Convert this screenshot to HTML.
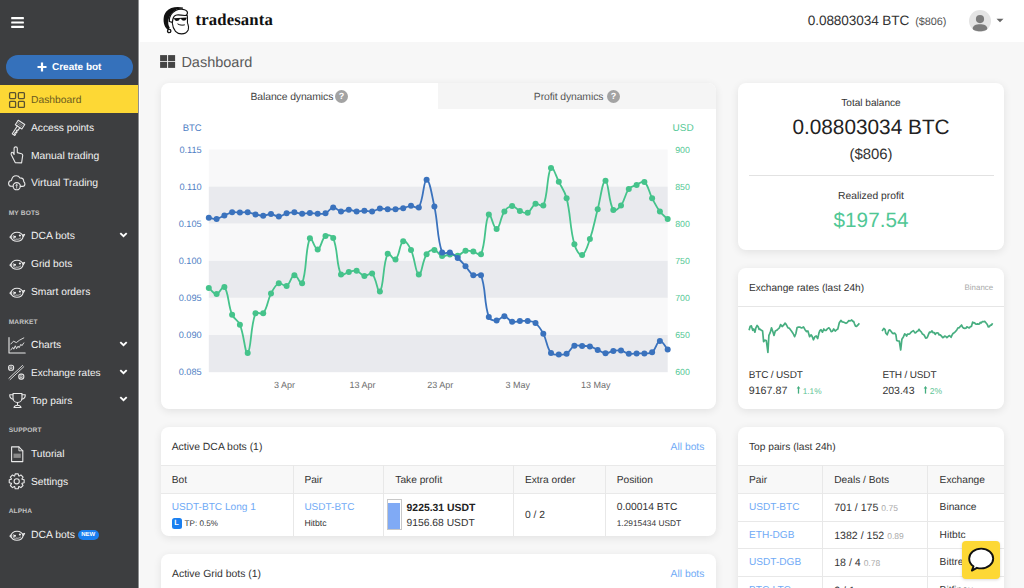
<!DOCTYPE html>
<html><head><meta charset="utf-8">
<style>
*{margin:0;padding:0;box-sizing:border-box}
html,body{width:1024px;height:588px;overflow:hidden;background:#f7f7f7;font-family:"Liberation Sans",sans-serif;color:#333;text-rendering:geometricPrecision;-webkit-font-smoothing:antialiased}
.a{position:absolute;white-space:nowrap}
.t{position:absolute;white-space:nowrap;line-height:20px;height:20px;margin-top:1px}
#side{position:absolute;left:0;top:0;width:138px;height:588px;background:#3d3e40}
#sedge{position:absolute;left:138px;top:0;width:1px;height:588px;background:#8f9091}
#swhite{position:absolute;left:139px;top:0;width:1px;height:588px;background:#fff}
#head{position:absolute;left:139px;top:0;width:885px;height:42px;background:#fff}
.card{position:absolute;background:#fff;border-radius:8px;box-shadow:0 2px 9px rgba(0,0,0,.09)}
.side-t{position:absolute;left:31px;font-size:10.3px;color:#f2f2f2;line-height:20px;height:20px;white-space:nowrap;margin-top:1px}
.sec{position:absolute;left:8.7px;font-size:6.6px;color:#c4c4c4;line-height:10px;height:10px;font-weight:bold;letter-spacing:0.15px;margin-top:1px}
.ic{position:absolute;left:8px}
.chev{position:absolute;left:119px}
</style></head>
<body>
<div id="side">
  <!-- hamburger -->
  <svg class="a" style="left:0;top:0" width="30" height="32"><rect x="11.2" y="17" width="12.7" height="2.2" rx="0.5" fill="#fff"/><rect x="11.2" y="21.4" width="12.7" height="2.2" rx="0.5" fill="#fff"/><rect x="11.2" y="25.8" width="12.7" height="2.2" rx="0.5" fill="#fff"/></svg>
  <!-- create bot -->
  <div class="a" style="left:6px;top:55px;width:127px;height:24px;border-radius:12px;background:#3571bb"></div>
  <svg class="a" style="left:36px;top:61px" width="12" height="12" viewBox="0 0 12 12"><path d="M6 1.5V10.5M1.5 6H10.5" stroke="#fff" stroke-width="2.2"/></svg>
  <div class="t" style="left:52px;top:57px;font-size:10px;font-weight:bold;color:#fff">Create bot</div>
  <!-- dashboard active -->
  <div class="a" style="left:0;top:85px;width:138px;height:28px;background:#fdd835"></div>
  <svg class="a" style="left:8px;top:91px" width="18" height="18" viewBox="0 0 18 18" fill="none" stroke="#5a5230" stroke-width="1.3"><rect x="1.6" y="1.6" width="6" height="6" rx="1"/><rect x="10.4" y="1.6" width="6" height="6" rx="1"/><rect x="1.6" y="10.4" width="6" height="6" rx="1"/><rect x="10.4" y="10.4" width="6" height="6" rx="1"/></svg>
  <div class="side-t" style="top:89.6px;color:#6b5a1f">Dashboard</div>
  <svg class="ic" style="top:118.7px" width="19" height="19" viewBox="0 0 19 19" fill="none" stroke="#e9e9e9" stroke-width="1.1" stroke-linejoin="round" stroke-linecap="round"><g transform="rotate(33 9.5 9.5)"><path d="M5.6 2.2h7.8v5.3H5.6z"/><path d="M7 4.1h5M7 5.6h5" stroke-width="0.7" stroke="#9a9a9a"/><path d="M8 7.5V16.8h3v-1.4h-1.1v-1.5h1.1v-1.4h-1.1V11h1.1V7.5"/></g></svg>
  <div class="side-t" style="top:117.8px;font-size:10.23px">Access points</div>
  <svg class="ic" style="top:146.4px" width="19" height="19" viewBox="0 0 19 19" fill="none" stroke="#e9e9e9" stroke-width="1.1" stroke-linejoin="round" stroke-linecap="round"><path d="M7.2 16.6 3.3 8.7C2.8 7.4 3.6 5.6 4.8 6.4L6.1 8.5V2.2C6.1.4 9.3.4 9.3 2.2V6.6l4.2 1.1c.8.2 1.2.8 1.2 1.6l-1.1 7.6z"/></svg>
  <div class="side-t" style="top:145.5px;font-size:10.33px">Manual trading</div>
  <svg class="ic" style="top:173.8px" width="19" height="19" viewBox="0 0 19 19" fill="none" stroke="#e9e9e9" stroke-width="1.1" stroke-linejoin="round" stroke-linecap="round"><path d="M5 12.3H3.6C1.8 12.3.6 11 .6 9.4c0-1.6 1.2-2.8 2.8-2.9C3.9 3.7 5.6 1.7 8.2 1.7c1.8 0 3.1.9 3.8 2.2 2.4 0 3.8 1.7 3.8 3.9.7.5 1.1 1.4 1.1 2.2 0 1.4-1.1 2.4-2.5 2.4h-2.1"/><circle cx="8.7" cy="12.2" r="3.6"/><path d="M8.7 10.2v4M7.8 11.2c.4-.5 1.4-.5 1.8 0" stroke-width="0.8"/></svg>
  <div class="side-t" style="top:172.9px;font-size:10.45px">Virtual Trading</div>
  <div class="sec" style="top:207.9px">MY BOTS</div>
  <svg class="ic" style="top:227.0px" width="19" height="19" viewBox="0 0 19 19" fill="none" stroke="#e9e9e9" stroke-width="1.1" stroke-linejoin="round" stroke-linecap="round"><ellipse cx="9" cy="9.8" rx="6" ry="4.5"/><path d="M3.2 8.8 1.9 10.1 3.3 11.3M14.6 8.1l2-.7-1.3 2.2"/><path d="M5.300 8.700c-.6 1.600.2 3.400 2 4" stroke-width="0.8"/><circle cx="6.9" cy="9.8" r="1.1" fill="#f0f0f0" stroke="none"/><circle cx="11.9" cy="8.5" r="1.1" fill="#f0f0f0" stroke="none"/><path d="M8.2 12.1c1.5.4 3 .1 4.4-1" stroke-width="0.8"/></svg>
  <div class="side-t" style="top:226.1px;font-size:10.4px">DCA bots</div>
  <svg class="chev" style="top:230.9px" width="9" height="8" viewBox="0 0 9 8"><path d="M1.3 2.1 4.5 5.2 7.7 2.1" fill="none" stroke="#fff" stroke-width="1.9"/></svg>
  <svg class="ic" style="top:254.9px" width="19" height="19" viewBox="0 0 19 19" fill="none" stroke="#e9e9e9" stroke-width="1.1" stroke-linejoin="round" stroke-linecap="round"><ellipse cx="9" cy="9.8" rx="6" ry="4.5"/><path d="M3.2 8.8 1.9 10.1 3.3 11.3M14.6 8.1l2-.7-1.3 2.2"/><path d="M5.300 8.700c-.6 1.600.2 3.400 2 4" stroke-width="0.8"/><circle cx="6.9" cy="9.8" r="1.1" fill="#f0f0f0" stroke="none"/><circle cx="11.9" cy="8.5" r="1.1" fill="#f0f0f0" stroke="none"/><path d="M8.2 12.1c1.5.4 3 .1 4.4-1" stroke-width="0.8"/></svg>
  <div class="side-t" style="top:254.0px;font-size:10.2px">Grid bots</div>
  <svg class="ic" style="top:282.6px" width="19" height="19" viewBox="0 0 19 19" fill="none" stroke="#e9e9e9" stroke-width="1.1" stroke-linejoin="round" stroke-linecap="round"><ellipse cx="9" cy="9.8" rx="6" ry="4.5"/><path d="M3.2 8.8 1.9 10.1 3.3 11.3M14.6 8.1l2-.7-1.3 2.2"/><path d="M5.300 8.700c-.6 1.600.2 3.400 2 4" stroke-width="0.8"/><circle cx="6.9" cy="9.8" r="1.1" fill="#f0f0f0" stroke="none"/><circle cx="11.9" cy="8.5" r="1.1" fill="#f0f0f0" stroke="none"/><path d="M8.2 12.1c1.5.4 3 .1 4.4-1" stroke-width="0.8"/></svg>
  <div class="side-t" style="top:281.7px;font-size:10.28px">Smart orders</div>
  <div class="sec" style="top:316.5px">MARKET</div>
  <svg class="ic" style="top:335.6px" width="19" height="19" viewBox="0 0 19 19" fill="none" stroke="#e9e9e9" stroke-width="1.1" stroke-linejoin="round" stroke-linecap="round"><path d="M1 1.5v15.5h16.2"/><path d="M2.8 8l2.7-2.8 2.8 1.4 3.2-2.4 4.3-2.3" stroke-width="0.9"/><path d="M2.8 14l2-2.6 1 1.8 1.5-3.4 1.3 2.9 1.5-2.6 1 1.6 1.8-3.4 1 1.4 1.9-2.8" stroke-width="0.9"/></svg>
  <div class="side-t" style="top:334.7px;font-size:10.22px">Charts</div>
  <svg class="chev" style="top:339.5px" width="9" height="8" viewBox="0 0 9 8"><path d="M1.3 2.1 4.5 5.2 7.7 2.1" fill="none" stroke="#fff" stroke-width="1.9"/></svg>
  <svg class="ic" style="top:363.8px" width="19" height="19" viewBox="0 0 19 19" fill="none" stroke="#e9e9e9" stroke-width="1.1" stroke-linejoin="round" stroke-linecap="round"><path d="M14.6 1.4.9 14.3M15.8 2.7 2.1 15.6" stroke-width="0.9"/><rect x="0.6" y="1.2" width="5" height="5" rx="2"/><rect x="10.8" y="10.1" width="5" height="5" rx="2"/><rect x="2.3" y="2.9" width="1.7" height="1.7" stroke-width="0.7"/><rect x="12.5" y="11.8" width="1.7" height="1.7" stroke-width="0.7"/></svg>
  <div class="side-t" style="top:362.9px;font-size:10.0px">Exchange rates</div>
  <svg class="chev" style="top:367.7px" width="9" height="8" viewBox="0 0 9 8"><path d="M1.3 2.1 4.5 5.2 7.7 2.1" fill="none" stroke="#fff" stroke-width="1.9"/></svg>
  <svg class="ic" style="top:391.4px" width="19" height="19" viewBox="0 0 19 19" fill="none" stroke="#e9e9e9" stroke-width="1.1" stroke-linejoin="round" stroke-linecap="round"><path d="M5 2.5h9v4.5c0 2.6-2 4.5-4.5 4.5S5 9.6 5 7z"/><path d="M5 3.8H1.7c0 2.5 1.5 4.2 3.6 4.4M14 3.8h3.3c0 2.5-1.5 4.2-3.6 4.4"/><path d="M9.5 11.5v2.8M6 16.5c.3-1.3 1.8-2.2 3.5-2.2s3.2.9 3.5 2.2z"/></svg>
  <div class="side-t" style="top:390.5px;font-size:10.2px">Top pairs</div>
  <svg class="chev" style="top:395.3px" width="9" height="8" viewBox="0 0 9 8"><path d="M1.3 2.1 4.5 5.2 7.7 2.1" fill="none" stroke="#fff" stroke-width="1.9"/></svg>
  <div class="sec" style="top:425.3px">SUPPORT</div>
  <svg class="ic" style="top:444.7px" width="19" height="19" viewBox="0 0 19 19" fill="none" stroke="#e9e9e9" stroke-width="1.1" stroke-linejoin="round" stroke-linecap="round"><path d="M3.6 1.9h7.3l3.9 3.9V16.6H3.6z"/><path d="M10.9 1.9v3.9h3.9" stroke-width="0.9"/><rect x="5.5" y="8.6" width="7.3" height="4.3" fill="#8a8a8a" stroke="none"/></svg>
  <div class="side-t" style="top:443.8px;font-size:10.16px">Tutorial</div>
  <svg class="ic" style="top:472.4px" width="19" height="19" viewBox="0 0 19 19" fill="none" stroke="#e9e9e9" stroke-width="1.1" stroke-linejoin="round" stroke-linecap="round"><path d="M14.03,7.29 L16.15,7.79 L16.15,10.81 L14.03,11.31 L13.89,11.65 L15.03,13.50 L12.90,15.63 L11.05,14.49 L10.71,14.63 L10.21,16.75 L7.19,16.75 L6.69,14.63 L6.35,14.49 L4.50,15.63 L2.37,13.50 L3.51,11.65 L3.37,11.31 L1.25,10.81 L1.25,7.79 L3.37,7.29 L3.51,6.95 L2.37,5.10 L4.50,2.97 L6.35,4.11 L6.69,3.97 L7.19,1.85 L10.21,1.85 L10.71,3.97 L11.05,4.11 L12.90,2.97 L15.03,5.10 L13.89,6.95Z"/><circle cx="8.7" cy="9.3" r="2.6"/></svg>
  <div class="side-t" style="top:471.5px;font-size:10.3px">Settings</div>
  <div class="sec" style="top:506.3px">ALPHA</div>
  <svg class="ic" style="top:525.6px" width="19" height="19" viewBox="0 0 19 19" fill="none" stroke="#e9e9e9" stroke-width="1.1" stroke-linejoin="round" stroke-linecap="round"><ellipse cx="9" cy="9.8" rx="6" ry="4.5"/><path d="M3.2 8.8 1.9 10.1 3.3 11.3M14.6 8.1l2-.7-1.3 2.2"/><path d="M5.300 8.700c-.6 1.600.2 3.400 2 4" stroke-width="0.8"/><circle cx="6.9" cy="9.8" r="1.1" fill="#f0f0f0" stroke="none"/><circle cx="11.9" cy="8.5" r="1.1" fill="#f0f0f0" stroke="none"/><path d="M8.2 12.1c1.5.4 3 .1 4.4-1" stroke-width="0.8"/></svg>
  <div class="side-t" style="top:524.7px;font-size:10.4px">DCA bots</div>
  <div class="a" style="left:77.5px;top:529.7px;width:21.5px;height:10px;border-radius:5px;background:#1a7ff0;color:#fff;font-size:6px;font-weight:bold;line-height:10px;text-align:center">NEW</div>
</div>
<div id="sedge"></div><div id="swhite"></div><div id="head"></div>
<!-- logo -->
<svg class="a" style="left:161px;top:4px" width="32" height="33" viewBox="0 0 32 33">
  <path d="M22 3.6C15.5 2.2 9 3.3 5.3 7.5 2.3 11 2 16.5 3.4 21c.8 2.5 2.300 4.100 3.800 5l1.600-2.200C7.300 21.500 7 19 7.400 16.300 8 12.300 10.300 8.500 14 6.400c2.300-1.200 5.200-1.700 7.500-1.500z" fill="#111"/>
  <path d="M8.300 17.500C8 13 10.200 8.800 14.600 6.500c2.900-1.400 6.400-1.600 8.900-.8 2 .6 3.200 1.900 2.900 3.600-.2 1.300-1.100 2.200-2.300 2.200-3.100-.4-6.300-.8-8.400-.5-2.200.3-3.500 2.300-3.900 4.500L11.400 18.300z" fill="#fff" stroke="#111" stroke-width="1.2" stroke-linejoin="round"/>
  <path d="M12.4 14.2 25.8 13.5l-.3 1.3c-.5 1.5-2 2.1-3.5 1.8-1.2-.2-1.7-1.1-2-1.8l-1.3.1c-.3 1.1-1.3 2-2.9 2-1.5 0-2.200-1-2.500-1.900h-.9z" fill="#111"/>
  <path d="M11.2 18.5c.3 3.5 1.3 6.5 3.3 8.8 1.5 1.700 3.500 2.600 6 2.600 3 0 5.500-1.400 6.700-3.900.7-1.600.6-3.500-.2-5.500-.3-.7-.5-1.500-.6-2M26.1 10.9c.7 2.300.4 5.300.3 7.600" fill="none" stroke="#111" stroke-width="1.1"/>
  <path d="M16.5 19.8c2 1.4 5 1.700 7.300 1" fill="none" stroke="#111" stroke-width="1"/>
  <circle cx="8.2" cy="27" r="1.7" fill="#fff" stroke="#111" stroke-width="1.3"/>
</svg>
<div class="t" style="left:195.6px;top:9.4px;font-family:'Liberation Serif',serif;font-weight:bold;font-size:16.7px;color:#111;letter-spacing:0.13px">tradesanta</div>
<div class="t" style="left:807.8px;top:10.1px;font-size:13.6px;letter-spacing:-0.1px;color:#333">0.08803034 BTC</div>
<div class="t" style="left:915.2px;top:10.9px;font-size:10.9px;letter-spacing:-0.05px;color:#555">($806)</div>
<svg class="a" style="left:969.2px;top:9.5px" width="22" height="22" viewBox="0 0 22 22"><circle cx="11" cy="11" r="11" fill="#e4e4e4"/><circle cx="11" cy="9.1" r="4.1" fill="#7b7b7b"/><path d="M3.7 18.6C3.7 15.8 6.800 14.300 11 14.300S18.300 15.800 18.300 18.600C18.300 20.300 15 21.300 11 21.300S3.700 20.300 3.700 18.600z" fill="#7b7b7b"/></svg>
<svg class="a" style="left:996.3px;top:18.2px" width="8" height="5" viewBox="0 0 8 5"><path d="M0.5 0.8h7L4 4.3z" fill="#666"/></svg>

<!-- page title -->
<svg class="a" style="left:160px;top:55px" width="16" height="14" viewBox="0 0 16 14"><rect x="0.1" y="0.1" width="7" height="6" fill="#444"/><rect x="8.1" y="0.1" width="7" height="6" fill="#444"/><rect x="0.1" y="6.9" width="7" height="6" fill="#444"/><rect x="8.1" y="6.9" width="7" height="6" fill="#444"/></svg>
<div class="t" style="left:181.4px;top:52px;font-size:14.5px;color:#5a5a5a">Dashboard</div>

<!-- chart card -->
<div class="card" style="left:161px;top:83px;width:555px;height:326px;overflow:hidden">
  <div class="a" style="left:277px;top:0;width:278px;height:26px;background:#f5f5f5"></div>
</div>
<div class="t" style="left:250.5px;top:87.1px;font-size:10.4px;letter-spacing:-0.1px;color:#444">Balance dynamics</div>
<div class="a" style="left:335px;top:90.2px;width:13px;height:13px;border-radius:50%;background:#a3a3a3;color:#fff;font-size:9px;font-weight:bold;text-align:center;line-height:13px">?</div>
<div class="t" style="left:533.8px;top:87.1px;font-size:10.4px;letter-spacing:-0.1px;color:#555">Profit dynamics</div>
<div class="a" style="left:607px;top:90.2px;width:13px;height:13px;border-radius:50%;background:#a3a3a3;color:#fff;font-size:9px;font-weight:bold;text-align:center;line-height:13px">?</div>

<svg class="a" style="left:0;top:0" width="1024" height="588">
  <rect x="208.8" y="149.5" width="458.9" height="37.1" fill="#f8f8f9"/>
  <rect x="208.8" y="186.6" width="458.9" height="37.1" fill="#e9eaee"/>
  <rect x="208.8" y="223.7" width="458.9" height="37.1" fill="#f8f8f9"/>
  <rect x="208.8" y="260.8" width="458.9" height="37.1" fill="#e9eaee"/>
  <rect x="208.8" y="297.9" width="458.9" height="37.1" fill="#f8f8f9"/>
  <rect x="208.8" y="335.0" width="458.9" height="37.2" fill="#e9eaee"/>
  <path d="M208.8,287.9C211.9,290.3 213.6,294.2 216.6,294.0C219.8,293.8 222.7,284.7 224.4,286.9C228.9,293.0 227.8,304.2 232.1,314.7C234.0,319.3 238.0,320.1 239.9,324.7C244.3,335.4 245.1,354.8 247.7,352.9C251.3,350.3 250.3,326.6 255.5,313.3C256.5,310.7 261.6,315.3 263.2,313.2C267.8,307.4 267.2,301.0 271.0,293.6C273.4,289.0 275.0,285.1 278.8,283.2C281.2,282.0 284.2,287.2 286.6,286.0C290.4,284.0 291.0,275.8 294.4,275.2C297.2,274.7 300.9,286.1 302.1,283.2C307.1,271.3 305.1,248.7 309.9,238.3C311.3,235.2 314.8,249.8 317.7,249.4C321.0,248.9 321.4,239.0 325.5,236.0C327.6,234.5 332.1,235.4 333.2,238.1C338.4,250.8 335.9,263.5 341.0,274.6C342.2,277.0 345.6,272.7 348.8,271.9C351.8,271.2 353.7,270.1 356.6,270.8C360.0,271.7 361.0,275.4 364.4,276.0C367.3,276.5 370.3,271.8 372.1,273.6C376.5,278.0 377.8,294.3 379.9,291.6C384.0,286.3 382.7,264.0 387.7,253.7C388.9,251.1 393.4,261.1 395.5,259.5C399.7,256.1 399.3,243.6 403.2,241.2C405.6,239.8 409.1,245.8 411.0,250.0C415.3,259.2 415.4,273.7 418.8,274.6C421.7,275.4 422.2,261.3 426.6,254.3C428.4,251.4 431.4,249.7 434.4,250.0C437.6,250.4 438.7,255.1 442.1,256.1C444.9,256.9 446.8,254.6 449.9,254.5C453.0,254.4 454.8,256.4 457.7,255.7C461.0,254.9 462.1,251.7 465.5,250.8C468.3,250.0 470.2,250.9 473.3,251.6C476.4,252.3 480.0,256.8 481.0,254.3C486.2,242.0 484.4,221.8 488.8,214.6C490.6,211.7 493.7,229.7 496.6,229.1C499.9,228.4 500.2,217.7 504.4,211.5C506.4,208.4 509.0,206.1 512.1,206.0C515.2,205.9 516.6,209.5 519.9,210.9C522.8,212.1 525.2,213.9 527.7,212.7C531.4,211.0 531.8,205.4 535.5,203.7C538.0,202.6 542.2,208.1 543.3,205.6C548.4,193.7 546.6,174.6 551.0,167.9C552.9,165.1 555.9,176.1 558.8,181.8C562.1,188.3 564.8,191.2 566.6,198.2C571.1,216.2 569.5,226.5 574.4,244.2C575.8,249.3 579.5,256.0 582.1,255.1C585.7,253.9 587.6,245.8 589.9,239.1C593.9,227.4 594.5,221.1 597.7,209.2C600.7,197.8 602.4,180.7 605.5,180.8C608.6,180.9 608.5,202.3 613.3,209.9C614.7,212.2 619.0,208.2 621.0,205.4C625.2,199.8 624.6,194.5 628.8,189.0C630.8,186.3 633.4,186.3 636.6,184.9C639.6,183.5 642.4,180.3 644.4,182.0C648.6,185.6 648.8,191.8 652.1,198.2C655.0,203.6 656.3,206.6 659.9,211.5C662.5,215.0 664.6,216.1 667.7,219.1" fill="none" stroke="#45c38b" stroke-width="1.8"/>
  <g fill="#45c38b"><circle cx="208.8" cy="287.9" r="3"/><circle cx="216.6" cy="294.0" r="3"/><circle cx="224.4" cy="286.9" r="3"/><circle cx="232.1" cy="314.7" r="3"/><circle cx="239.9" cy="324.7" r="3"/><circle cx="247.7" cy="352.9" r="3"/><circle cx="255.5" cy="313.3" r="3"/><circle cx="263.2" cy="313.2" r="3"/><circle cx="271.0" cy="293.6" r="3"/><circle cx="278.8" cy="283.2" r="3"/><circle cx="286.6" cy="286.0" r="3"/><circle cx="294.4" cy="275.2" r="3"/><circle cx="302.1" cy="283.2" r="3"/><circle cx="309.9" cy="238.3" r="3"/><circle cx="317.7" cy="249.4" r="3"/><circle cx="325.5" cy="236.0" r="3"/><circle cx="333.2" cy="238.1" r="3"/><circle cx="341.0" cy="274.6" r="3"/><circle cx="348.8" cy="271.9" r="3"/><circle cx="356.6" cy="270.8" r="3"/><circle cx="364.4" cy="276.0" r="3"/><circle cx="372.1" cy="273.6" r="3"/><circle cx="379.9" cy="291.6" r="3"/><circle cx="387.7" cy="253.7" r="3"/><circle cx="395.5" cy="259.5" r="3"/><circle cx="403.2" cy="241.2" r="3"/><circle cx="411.0" cy="250.0" r="3"/><circle cx="418.8" cy="274.6" r="3"/><circle cx="426.6" cy="254.3" r="3"/><circle cx="434.4" cy="250.0" r="3"/><circle cx="442.1" cy="256.1" r="3"/><circle cx="449.9" cy="254.5" r="3"/><circle cx="457.7" cy="255.7" r="3"/><circle cx="465.5" cy="250.8" r="3"/><circle cx="473.3" cy="251.6" r="3"/><circle cx="481.0" cy="254.3" r="3"/><circle cx="488.8" cy="214.6" r="3"/><circle cx="496.6" cy="229.1" r="3"/><circle cx="504.4" cy="211.5" r="3"/><circle cx="512.1" cy="206.0" r="3"/><circle cx="519.9" cy="210.9" r="3"/><circle cx="527.7" cy="212.7" r="3"/><circle cx="535.5" cy="203.7" r="3"/><circle cx="543.3" cy="205.6" r="3"/><circle cx="551.0" cy="167.9" r="3"/><circle cx="558.8" cy="181.8" r="3"/><circle cx="566.6" cy="198.2" r="3"/><circle cx="574.4" cy="244.2" r="3"/><circle cx="582.1" cy="255.1" r="3"/><circle cx="589.9" cy="239.1" r="3"/><circle cx="597.7" cy="209.2" r="3"/><circle cx="605.5" cy="180.8" r="3"/><circle cx="613.3" cy="209.9" r="3"/><circle cx="621.0" cy="205.4" r="3"/><circle cx="628.8" cy="189.0" r="3"/><circle cx="636.6" cy="184.9" r="3"/><circle cx="644.4" cy="182.0" r="3"/><circle cx="652.1" cy="198.2" r="3"/><circle cx="659.9" cy="211.5" r="3"/><circle cx="667.7" cy="219.1" r="3"/></g>
  <path d="M208.8,217.8C211.9,218.2 213.6,219.4 216.6,218.9C219.8,218.4 221.2,216.7 224.4,215.4C227.4,214.1 228.9,212.9 232.1,212.3C235.1,211.7 236.8,212.5 239.9,212.5C243.0,212.5 244.6,211.9 247.7,212.3C250.9,212.7 252.3,213.7 255.5,214.4C258.5,215.1 260.2,215.9 263.2,215.8C266.4,215.7 268.0,213.8 271.0,214.0C274.2,214.2 275.7,216.7 278.8,216.6C282.0,216.5 283.4,214.2 286.6,213.3C289.6,212.5 291.3,212.2 294.4,212.3C297.5,212.4 299.0,213.7 302.1,213.8C305.2,213.9 306.8,212.9 309.9,212.9C313.0,212.9 314.6,213.6 317.7,213.7C320.8,213.8 322.7,214.4 325.5,213.3C328.9,211.9 330.0,207.8 333.2,207.4C336.2,207.1 337.8,211.0 341.0,211.5C344.0,211.9 345.7,209.7 348.8,209.7C351.9,209.7 353.4,211.3 356.6,211.5C359.7,211.7 361.2,210.7 364.4,210.7C367.5,210.7 369.1,211.9 372.1,211.5C375.3,211.1 376.7,209.1 379.9,208.6C382.9,208.2 384.6,209.1 387.7,209.2C390.8,209.3 392.4,209.4 395.5,209.2C398.6,209.0 400.2,208.9 403.2,208.2C406.4,207.5 407.9,206.0 411.0,205.8C414.1,205.6 417.5,209.7 418.8,207.4C423.7,199.3 423.4,180.0 426.6,179.8C429.7,179.6 432.0,195.7 434.4,206.6C438.3,224.8 436.8,236.8 442.1,252.6C443.0,255.2 447.1,251.6 449.9,252.6C453.3,253.8 454.9,255.5 457.7,258.0C461.1,261.0 462.4,262.8 465.5,266.2C468.7,269.7 469.5,273.0 473.3,275.2C475.7,276.6 480.1,272.6 481.0,275.2C486.3,289.3 483.6,301.8 488.8,316.9C489.9,320.0 493.5,320.7 496.6,320.6C499.7,320.5 501.4,316.1 504.4,316.3C507.6,316.5 508.7,320.8 512.1,321.8C514.9,322.6 516.8,321.2 519.9,321.0C523.0,320.8 524.6,320.6 527.7,321.0C530.9,321.4 533.1,321.2 535.5,323.1C539.3,326.2 540.8,329.1 543.3,333.7C547.1,341.1 546.5,347.1 551.0,353.1C552.7,355.4 555.7,354.3 558.8,354.4C561.9,354.5 564.0,355.2 566.6,353.8C570.2,351.8 570.7,347.6 574.4,345.8C576.9,344.5 579.0,345.9 582.1,346.0C585.3,346.1 587.0,345.7 589.9,346.4C593.2,347.2 594.6,348.5 597.7,349.9C600.8,351.3 602.3,353.0 605.5,353.2C608.5,353.4 610.1,351.5 613.3,350.9C616.3,350.4 618.0,349.9 621.0,350.5C624.3,351.1 625.6,353.2 628.8,353.8C631.8,354.4 633.5,353.5 636.6,353.4C639.7,353.3 641.3,353.6 644.4,353.4C647.5,353.2 649.9,354.1 652.1,352.3C656.1,349.2 656.5,341.7 659.9,341.1C662.8,340.6 664.6,346.1 667.7,349.5" fill="none" stroke="#3a72bd" stroke-width="1.8"/>
  <g fill="#3a72bd"><circle cx="208.8" cy="217.8" r="3"/><circle cx="216.6" cy="218.9" r="3"/><circle cx="224.4" cy="215.4" r="3"/><circle cx="232.1" cy="212.3" r="3"/><circle cx="239.9" cy="212.5" r="3"/><circle cx="247.7" cy="212.3" r="3"/><circle cx="255.5" cy="214.4" r="3"/><circle cx="263.2" cy="215.8" r="3"/><circle cx="271.0" cy="214.0" r="3"/><circle cx="278.8" cy="216.6" r="3"/><circle cx="286.6" cy="213.3" r="3"/><circle cx="294.4" cy="212.3" r="3"/><circle cx="302.1" cy="213.8" r="3"/><circle cx="309.9" cy="212.9" r="3"/><circle cx="317.7" cy="213.7" r="3"/><circle cx="325.5" cy="213.3" r="3"/><circle cx="333.2" cy="207.4" r="3"/><circle cx="341.0" cy="211.5" r="3"/><circle cx="348.8" cy="209.7" r="3"/><circle cx="356.6" cy="211.5" r="3"/><circle cx="364.4" cy="210.7" r="3"/><circle cx="372.1" cy="211.5" r="3"/><circle cx="379.9" cy="208.6" r="3"/><circle cx="387.7" cy="209.2" r="3"/><circle cx="395.5" cy="209.2" r="3"/><circle cx="403.2" cy="208.2" r="3"/><circle cx="411.0" cy="205.8" r="3"/><circle cx="418.8" cy="207.4" r="3"/><circle cx="426.6" cy="179.8" r="3"/><circle cx="434.4" cy="206.6" r="3"/><circle cx="442.1" cy="252.6" r="3"/><circle cx="449.9" cy="252.6" r="3"/><circle cx="457.7" cy="258.0" r="3"/><circle cx="465.5" cy="266.2" r="3"/><circle cx="473.3" cy="275.2" r="3"/><circle cx="481.0" cy="275.2" r="3"/><circle cx="488.8" cy="316.9" r="3"/><circle cx="496.6" cy="320.6" r="3"/><circle cx="504.4" cy="316.3" r="3"/><circle cx="512.1" cy="321.8" r="3"/><circle cx="519.9" cy="321.0" r="3"/><circle cx="527.7" cy="321.0" r="3"/><circle cx="535.5" cy="323.1" r="3"/><circle cx="543.3" cy="333.7" r="3"/><circle cx="551.0" cy="353.1" r="3"/><circle cx="558.8" cy="354.4" r="3"/><circle cx="566.6" cy="353.8" r="3"/><circle cx="574.4" cy="345.8" r="3"/><circle cx="582.1" cy="346.0" r="3"/><circle cx="589.9" cy="346.4" r="3"/><circle cx="597.7" cy="349.9" r="3"/><circle cx="605.5" cy="353.2" r="3"/><circle cx="613.3" cy="350.9" r="3"/><circle cx="621.0" cy="350.5" r="3"/><circle cx="628.8" cy="353.8" r="3"/><circle cx="636.6" cy="353.4" r="3"/><circle cx="644.4" cy="353.4" r="3"/><circle cx="652.1" cy="352.3" r="3"/><circle cx="659.9" cy="341.1" r="3"/><circle cx="667.7" cy="349.5" r="3"/></g>
</svg>
<div class="t" style="left:182.7px;top:117.8px;font-size:9.5px;color:#4f80c4;">BTC</div>
<div class="t" style="left:672.6px;top:117.8px;font-size:10px;color:#54c895;">USD</div>
<div class="t" style="left:1.7px;width:200px;text-align:right;top:138.5px;font-size:9.2px;color:#4f80c4;">0.115</div>
<div class="t" style="left:675.2px;top:138.5px;font-size:8.8px;color:#54c895;">900</div>
<div class="t" style="left:1.7px;width:200px;text-align:right;top:175.6px;font-size:9.2px;color:#4f80c4;">0.110</div>
<div class="t" style="left:675.2px;top:175.6px;font-size:8.8px;color:#54c895;">850</div>
<div class="t" style="left:1.7px;width:200px;text-align:right;top:212.7px;font-size:9.2px;color:#4f80c4;">0.105</div>
<div class="t" style="left:675.2px;top:212.7px;font-size:8.8px;color:#54c895;">800</div>
<div class="t" style="left:1.7px;width:200px;text-align:right;top:249.8px;font-size:9.2px;color:#4f80c4;">0.100</div>
<div class="t" style="left:675.2px;top:249.8px;font-size:8.8px;color:#54c895;">750</div>
<div class="t" style="left:1.7px;width:200px;text-align:right;top:286.9px;font-size:9.2px;color:#4f80c4;">0.095</div>
<div class="t" style="left:675.2px;top:286.9px;font-size:8.8px;color:#54c895;">700</div>
<div class="t" style="left:1.7px;width:200px;text-align:right;top:324.0px;font-size:9.2px;color:#4f80c4;">0.090</div>
<div class="t" style="left:675.2px;top:324.0px;font-size:8.8px;color:#54c895;">650</div>
<div class="t" style="left:1.7px;width:200px;text-align:right;top:361.1px;font-size:9.2px;color:#4f80c4;">0.085</div>
<div class="t" style="left:675.2px;top:361.1px;font-size:8.8px;color:#54c895;">600</div>
<div class="t" style="left:184.4px;width:200px;text-align:center;top:373.5px;font-size:9px;color:#6e6e6e;">3 Apr</div>
<div class="t" style="left:262.5px;width:200px;text-align:center;top:373.5px;font-size:9px;color:#6e6e6e;">13 Apr</div>
<div class="t" style="left:340.2px;width:200px;text-align:center;top:373.5px;font-size:9px;color:#6e6e6e;">23 Apr</div>
<div class="t" style="left:417.8px;width:200px;text-align:center;top:373.5px;font-size:9px;color:#6e6e6e;">3 May</div>
<div class="t" style="left:495.7px;width:200px;text-align:center;top:373.5px;font-size:9px;color:#6e6e6e;">13 May</div>

<!-- total balance -->
<div class="card" style="left:738px;top:83px;width:266px;height:166.5px"></div>
<div class="t" style="left:738px;width:266px;text-align:center;top:93.3px;font-size:10.1px;color:#333">Total balance</div>
<div class="t" style="left:738px;width:266px;text-align:center;top:117px;font-size:20.8px;color:#222">0.08803034 BTC</div>
<div class="t" style="left:738px;width:266px;text-align:center;top:144px;font-size:14.9px;color:#333">($806)</div>
<div class="a" style="left:749px;top:175px;width:244.5px;height:1px;background:#e2e2e2"></div>
<div class="t" style="left:738px;width:266px;text-align:center;top:185.9px;font-size:10.3px;color:#333">Realized profit</div>
<div class="t" style="left:738px;width:266px;text-align:center;top:210.1px;font-size:20.7px;color:#50c795">$197.54</div>

<!-- exchange rates -->
<div class="card" style="left:738px;top:268px;width:266px;height:140.5px"></div>
<div class="t" style="left:749px;top:277.6px;font-size:10.1px;color:#333">Exchange rates (last 24h)</div>
<div class="t" style="left:964.6px;top:277.4px;font-size:7.9px;color:#aaa">Binance</div>
<div class="a" style="left:738px;top:305.5px;width:266px;height:1px;background:#e6e6e6"></div>
<svg class="a" style="left:0;top:0" width="1024" height="588">
  <path d="M749.1,330.3 L750.2,326.2 L751.4,325.9 L752.7,330.3 L753.7,329.0 L754.9,332.2 L755.9,327.8 L757.1,325.5 L758.4,327.1 L759.0,329.3 L760.0,329.2 L761.0,330.0 L762.6,331.0 L763.6,341.7 L764.8,340.2 L766.3,340.5 L767.9,352.5 L768.9,335.4 L770.2,332.6 L771.5,327.8 L772.8,331.6 L774.0,335.4 L775.3,331.0 L776.8,330.3 L778.1,329.0 L779.4,327.8 L780.6,324.6 L782.1,326.5 L783.8,325.0 L785.1,323.1 L786.3,324.6 L788.0,327.8 L789.5,328.4 L790.5,329.8 L791.4,331.0 L793.1,333.5 L794.6,336.7 L795.9,333.5 L797.1,327.5 L798.4,327.1 L799.7,327.1 L800.7,327.6 L801.6,327.8 L802.5,327.6 L803.5,326.9 L805.0,329.7 L806.6,331.6 L807.9,331.0 L809.6,336.7 L811.1,334.8 L812.2,336.5 L813.4,339.8 L814.9,336.7 L816.2,336.0 L817.7,338.6 L819.0,332.9 L820.0,330.4 L821.0,329.7 L822.5,332.2 L823.8,329.0 L825.0,330.3 L826.3,330.3 L827.6,328.6 L828.9,327.8 L830.0,329.2 L831.2,331.6 L832.5,331.2 L833.7,329.0 L835.2,331.0 L836.5,329.9 L837.8,329.0 L839.3,322.7 L840.9,320.4 L842.2,321.9 L843.5,322.1 L844.8,322.7 L846.0,323.3 L847.0,322.8 L847.9,321.7 L848.8,320.6 L849.8,320.8 L850.8,320.6 L851.7,319.9 L852.7,321.3 L853.6,321.4 L854.5,323.8 L855.5,326.2 L856.5,326.3 L857.4,325.5 L858.3,324.7 L859.3,323.3" fill="none" stroke="#47ae80" stroke-width="1.7" stroke-linejoin="round"/>
  <path d="M882.1,331.0 L883.8,328.4 L885.1,329.7 L885.7,332.9 L887.2,334.8 L888.9,330.3 L889.8,329.9 L890.8,331.0 L892.3,333.1 L893.5,333.6 L894.6,333.1 L895.9,334.8 L896.7,340.5 L898.0,341.0 L899.3,341.1 L900.7,350.0 L901.9,339.2 L903.5,336.7 L904.7,333.9 L905.7,334.6 L906.6,336.0 L907.5,334.2 L908.5,334.1 L909.8,333.8 L911.1,332.2 L912.2,331.4 L913.4,330.6 L914.9,332.9 L915.8,332.6 L916.8,331.6 L917.9,331.1 L919.0,329.3 L920.1,330.9 L921.2,331.8 L922.5,334.1 L923.8,334.8 L924.8,336.3 L925.7,338.2 L926.7,338.0 L927.6,336.7 L928.5,334.4 L929.5,332.2 L930.8,332.3 L932.0,330.9 L933.1,332.7 L934.1,332.5 L935.2,334.4 L936.2,333.0 L937.1,332.9 L938.2,333.0 L939.2,335.0 L940.3,334.8 L941.5,336.1 L942.8,337.7 L943.8,337.1 L944.7,336.0 L945.8,336.5 L946.9,337.7 L948.0,336.7 L949.2,335.6 L950.2,336.2 L951.1,337.3 L952.0,335.1 L953.0,333.5 L954.2,332.7 L955.5,331.6 L956.8,329.9 L958.1,327.8 L959.3,327.6 L960.4,326.3 L961.6,325.0 L962.7,327.4 L963.8,328.2 L964.8,328.4 L965.9,328.2 L966.9,326.8 L968.2,327.6 L969.5,327.8 L970.5,326.5 L971.4,326.5 L972.7,322.1 L973.7,323.0 L974.6,322.7 L975.5,323.9 L976.5,324.2 L977.5,323.9 L978.4,324.2 L979.4,324.0 L980.3,322.4 L981.2,322.9 L982.2,321.7 L983.5,321.7 L984.7,321.4 L985.9,322.8 L987.1,324.2 L988.3,326.8 L989.3,326.6 L990.4,325.2 L991.5,325.1 L992.6,323.3" fill="none" stroke="#47ae80" stroke-width="1.7" stroke-linejoin="round"/>
</svg>
<div class="t" style="left:748.7px;top:364.6px;font-size:10px;letter-spacing:-0.16px;color:#333">BTC / USDT</div>
<div class="t" style="left:748.7px;top:379.5px;font-size:10.7px;color:#333">9167.87</div>
<svg class="a" style="left:795.6px;top:385px" width="5" height="10" viewBox="0 0 5 10"><path d="M2.5 8.6V2.5" stroke="#43ad7e" stroke-width="1.3"/><path d="M0.7 3.6 2.5 0.9 4.3 3.6z" fill="#43ad7e"/></svg>
<div class="t" style="left:802.7px;top:380px;font-size:8.3px;color:#5ec495">1.1%</div>
<div class="t" style="left:882.4px;top:364.6px;font-size:10px;letter-spacing:-0.16px;color:#333">ETH / USDT</div>
<div class="t" style="left:882.4px;top:379.5px;font-size:10.5px;color:#333">203.43</div>
<svg class="a" style="left:922.9px;top:385px" width="5" height="10" viewBox="0 0 5 10"><path d="M2.5 8.6V2.5" stroke="#43ad7e" stroke-width="1.3"/><path d="M0.7 3.6 2.5 0.9 4.3 3.6z" fill="#43ad7e"/></svg>
<div class="t" style="left:929.8px;top:380px;font-size:8.5px;color:#5ec495">2%</div>

<div class="card" style="left:161px;top:426.5px;width:555px;height:109.3px;overflow:hidden"><div class="a" style="left:0;top:38.9px;width:555px;height:28.8px;background:#f8f8f8;border-top:1px solid #e9e9e9;border-bottom:1px solid #e9e9e9"></div><div class="a" style="left:131.5px;top:38.9px;width:1px;height:80px;background:#e8e8e8"></div><div class="a" style="left:222.0px;top:38.9px;width:1px;height:80px;background:#e8e8e8"></div><div class="a" style="left:352.0px;top:38.9px;width:1px;height:80px;background:#e8e8e8"></div><div class="a" style="left:444.0px;top:38.9px;width:1px;height:80px;background:#e8e8e8"></div></div>
<div class="t" style="left:171.7px;top:437.1px;font-size:10.4px;color:#333;">Active DCA bots (1)</div>
<div class="t" style="left:504.4px;width:200px;text-align:right;top:437.1px;font-size:10.3px;color:#70aaf6;">All bots</div>
<div class="t" style="left:171.7px;top:470.4px;font-size:10.2px;color:#333;">Bot</div>
<div class="t" style="left:304.4px;top:470.4px;font-size:10.2px;color:#333;">Pair</div>
<div class="t" style="left:395.3px;top:470.4px;font-size:10.2px;color:#333;">Take profit</div>
<div class="t" style="left:524.9px;top:470.4px;font-size:10.2px;color:#333;">Extra order</div>
<div class="t" style="left:616.7px;top:470.4px;font-size:10.2px;color:#333;">Position</div>
<div class="t" style="left:171.7px;top:497.3px;font-size:10.1px;color:#70aaf6;">USDT-BTC Long 1</div>
<div class="a" style="left:171.6px;top:518px;width:10px;height:10.7px;border-radius:2.5px;background:#1a7ff0;color:#fff;font-size:7.5px;font-weight:bold;line-height:10.7px;text-align:center">L</div>
<div class="t" style="left:184.6px;top:513.2px;font-size:8.1px;color:#333;">TP: 0.5%</div>
<div class="t" style="left:304.4px;top:497.3px;font-size:10px;color:#70aaf6;">USDT-BTC</div>
<div class="t" style="left:304.4px;top:512.4px;font-size:8.7px;color:#333;">Hitbtc</div>
<div class="a" style="left:387.2px;top:499.2px;width:14.5px;height:31px;border:1px solid #c8c8c8;background:#fff"><div class="a" style="left:0;top:2.6px;width:12.1px;height:26.4px;background:#80aaf5"></div></div>
<div class="t" style="left:406.6px;top:498.0px;font-size:10.4px;color:#222;font-weight:bold">9225.31 USDT</div>
<div class="t" style="left:406.6px;top:512.9px;font-size:10.3px;color:#333;">9156.68 USDT</div>
<div class="t" style="left:524.9px;top:505.3px;font-size:10.3px;color:#333;">0 / 2</div>
<div class="t" style="left:616.7px;top:497.3px;font-size:10.3px;color:#333;">0.00014 BTC</div>
<div class="t" style="left:616.7px;top:511.9px;font-size:8.35px;color:#333;">1.2915434 USDT</div>
<div class="card" style="left:161px;top:554.3px;width:555px;height:60px"></div>
<div class="t" style="left:172.0px;top:564.2px;font-size:10.4px;color:#333;">Active Grid bots (1)</div>
<div class="t" style="left:504.4px;width:200px;text-align:right;top:564.2px;font-size:10.3px;color:#70aaf6;">All bots</div>
<div class="card" style="left:738px;top:427px;width:266px;height:200px;overflow:hidden"><div class="a" style="left:0;top:38.4px;width:266px;height:28.8px;background:#f8f8f8;border-top:1px solid #e9e9e9;border-bottom:1px solid #e9e9e9"></div><div class="a" style="left:0;top:94.0px;width:266px;height:1px;background:#e8e8e8"></div><div class="a" style="left:0;top:121.0px;width:266px;height:1px;background:#e8e8e8"></div><div class="a" style="left:0;top:149.0px;width:266px;height:1px;background:#e8e8e8"></div><div class="a" style="left:84.0px;top:38.4px;width:1px;height:200px;background:#e8e8e8"></div><div class="a" style="left:189.0px;top:38.4px;width:1px;height:200px;background:#e8e8e8"></div></div>
<div class="t" style="left:749.0px;top:436.9px;font-size:10.2px;color:#333;">Top pairs (last 24h)</div>
<div class="t" style="left:749.0px;top:470.4px;font-size:10.2px;color:#333;">Pair</div>
<div class="t" style="left:834.2px;top:470.4px;font-size:10.2px;color:#333;">Deals / Bots</div>
<div class="t" style="left:939.6px;top:470.4px;font-size:10.2px;color:#333;">Exchange</div>
<div class="t" style="left:749.0px;top:496.9px;font-size:10.1px;color:#70aaf6;">USDT-BTC</div>
<div class="t" style="left:834.2px;top:496.9px;font-size:10.6px;color:#333;">701 / 175 <span style="font-size:8.5px;color:#aaa">0.75</span></div>
<div class="t" style="left:939.6px;top:496.9px;font-size:10.2px;color:#333;">Binance</div>
<div class="t" style="left:749.0px;top:524.6px;font-size:10.1px;color:#70aaf6;">ETH-DGB</div>
<div class="t" style="left:834.2px;top:524.6px;font-size:10.6px;color:#333;">1382 / 152 <span style="font-size:8.5px;color:#aaa">0.89</span></div>
<div class="t" style="left:939.6px;top:524.6px;font-size:10.2px;color:#333;">Hitbtc</div>
<div class="t" style="left:749.0px;top:552.4px;font-size:10.1px;color:#70aaf6;">USDT-DGB</div>
<div class="t" style="left:834.2px;top:552.4px;font-size:10.6px;color:#333;">18 / 4 <span style="font-size:8.5px;color:#aaa">0.78</span></div>
<div class="t" style="left:939.6px;top:552.4px;font-size:10.2px;color:#333;">Bittrex</div>
<div class="t" style="left:749.0px;top:580.1px;font-size:10.1px;color:#70aaf6;">BTC-LTC</div>
<div class="t" style="left:834.2px;top:580.1px;font-size:10.6px;color:#333;">2 / 1 <span style="font-size:8.5px;color:#aaa">0.5</span></div>
<div class="t" style="left:939.6px;top:580.1px;font-size:10.2px;color:#333;">Bitfinex</div>

<!-- chat -->
<div class="a" style="left:962px;top:540.5px;width:38px;height:38px;border-radius:4px;background:#fdd835;box-shadow:0 1px 3px rgba(0,0,0,.15)"></div>
<svg class="a" style="left:962px;top:540.5px" width="38" height="38" viewBox="0 0 38 38"><path d="M19.2 7.6c6.6 0 12 4.4 12 9.9s-5.4 9.9-12 9.9c-1.5 0-3-.2-4.3-.6l-5 2.8 1.6-4.3C8.6 23.5 7.2 20.7 7.2 17.5c0-5.5 5.4-9.9 12-9.9z" fill="#fff" stroke="#111" stroke-width="1.9" stroke-linejoin="round"/></svg>

</body></html>
